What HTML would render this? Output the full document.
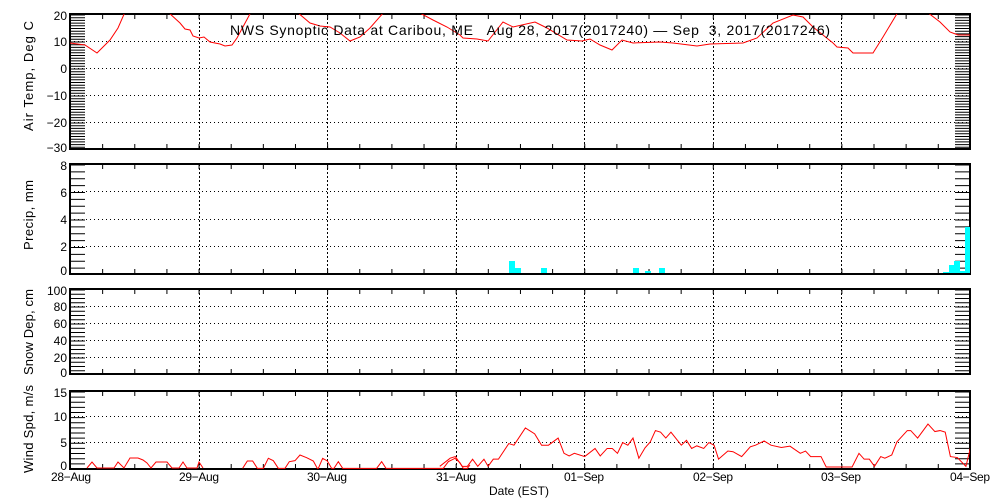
<!DOCTYPE html>
<html><head><meta charset="utf-8"><style>
html,body{margin:0;padding:0;background:#fff;}
svg{display:block;font-family:"Liberation Sans",sans-serif;font-size:12px;}
</style></head><body>
<svg width="1000" height="500" viewBox="0 0 1000 500" xmlns="http://www.w3.org/2000/svg">
<defs>
<clipPath id="c1"><rect x="70" y="14" width="900" height="135"/></clipPath>
<clipPath id="c4"><rect x="70" y="391" width="900" height="78"/></clipPath>
</defs>
<rect width="1000" height="500" fill="#fff"/>
<g stroke="#000" fill="none">
<g stroke-dasharray="2 2" stroke-width="1">
<path d="M199.5 14V149M327.5 14V149M456.5 14V149M584.5 14V149M713.5 14V149M841.5 14V149"/>
<path d="M199.5 164V274M327.5 164V274M456.5 164V274M584.5 164V274M713.5 164V274M841.5 164V274"/>
<path d="M199.5 289V374M327.5 289V374M456.5 289V374M584.5 289V374M713.5 289V374M841.5 289V374"/>
<path d="M199.5 391V469M327.5 391V469M456.5 391V469M584.5 391V469M713.5 391V469M841.5 391V469"/>
</g>
<g stroke-dasharray="1 3" stroke-width="1">
<path d="M70 41.5H970M70 68.5H970M70 95.5H970M70 122.5H970"/>
<path d="M70 191.5H970M70 219.5H970M70 246.5H970"/>
<path d="M70 306.5H970M70 323.5H970M70 340.5H970M70 357.5H970"/>
<path d="M70 416.5H970M70 442.5H970"/>
</g>
<g stroke-width="15">
<path d="M77.5 14.5V149" stroke-dasharray="1 1.7"/>
<path d="M962.5 14.5V149" stroke-dasharray="1 1.7"/>
<path d="M77.5 164.5V274" stroke-dasharray="1 5.875"/>
<path d="M962.5 164.5V274" stroke-dasharray="1 5.875"/>
<path d="M77.5 289.5V374" stroke-dasharray="1 3.25"/>
<path d="M962.5 289.5V374" stroke-dasharray="1 3.25"/>
<path d="M77.5 391.5V469" stroke-dasharray="1 4.13"/>
<path d="M962.5 391.5V469" stroke-dasharray="1 4.13"/>
</g>
<g stroke-width="5" stroke-dasharray="1 31.14">
<path d="M70 16.5H971M70 146.5H971"/>
<path d="M70 166.5H971M70 271.5H971"/>
<path d="M70 291.5H971M70 371.5H971"/>
<path d="M70 393.5H971M70 466.5H971"/>
</g>
<g stroke-width="2">
<rect x="70" y="14" width="900" height="135"/>
<rect x="70" y="164" width="900" height="110"/>
<rect x="70" y="289" width="900" height="85"/>
<rect x="70" y="391" width="900" height="78"/>
</g>
</g>
<g fill="#00ffff">
<rect x="509" y="261" width="6" height="12"/>
<rect x="515" y="268" width="6" height="5"/>
<rect x="541" y="268" width="6" height="5"/>
<rect x="633" y="268" width="6" height="5"/>
<rect x="645" y="271" width="6" height="2"/>
<rect x="659" y="268" width="6" height="5"/>
<rect x="943" y="272" width="6" height="1"/>
<rect x="949" y="265" width="5" height="8"/>
<rect x="954" y="261" width="6" height="12"/>
<rect x="960" y="271" width="5" height="2"/>
<rect x="965" y="227" width="5" height="46"/>
</g>
<polyline clip-path="url(#c1)" fill="none" stroke="#f00" stroke-width="1" points="70,43 85,45 97,53 102,48 110,40 118,28 125,12 168,12 180,23 185,29 190,30 193,36 199,38 204,37 210,42 220,44 225,46 232,45 237,38 251,12 297,12 310,23 320,26 330,27 340,33 350,41 360,37 370,28 384,12 418,12 433,20 447,27 460,35 463,38 477,39 488,41 503,22 513,27 535,22 547,28 567,40 582,41 590,39 600,45 612,50 622,40 633,43 660,42 673,43 697,46 710,44 743,43 757,38 773,23 793,15 803,17 813,27 833,43 837,47 848,48 853,53 873,53 883,37 898,12 927,12 940,22 950,32 958,35 970,35"/>
<g clip-path="url(#c4)" fill="none" stroke="#f00" stroke-width="1">
<polyline points="87,468 92,462 97,468 114,468 118,462 124,468 130,458 138,458 143,460 147,463 151,468 156,462 167,462 172,468 179,468 183,462 187,468 197,468 199,462 203,468"/>
<polyline transform="translate(230 440) scale(0.3333)" vector-effect="non-scaling-stroke" points="38,85 52,63 68,63 82,85 100,85 115,55 130,62 145,85 165,85 178,65 195,62 210,45 230,53 250,63 262,85 265,85 278,55 292,63 305,85 312,85 325,65 338,85 440,85 455,65 468,85 640,85 655,65 675,55 690,68 700,85 712,85 720,75"/>
<polyline transform="translate(439.8 380.2) scale(0.345 0.325)" vector-effect="non-scaling-stroke" points="0,265 30,240 45,235 65,265 80,265 95,243 110,265 128,243 140,265 155,243 170,243 200,195 215,200 248,147 275,165 295,200 315,200 343,178 360,225 375,233 390,225 420,235 450,210 465,233 485,210 500,210 515,225 530,192 545,200 560,178 577,240 595,208 610,190 625,155 640,160 655,178 670,160 700,200 715,185 730,210 745,202 765,210 780,192 795,200 808,243 835,218 850,220 875,235 900,205 915,200 940,187 960,200 990,207 1015,203 1045,225 1060,218 1075,235 1105,235 1120,267 1195,267 1215,225 1230,243 1245,243 1260,265 1278,235 1290,240 1310,230 1325,190 1355,155 1365,155 1385,178 1415,135 1435,158 1450,155 1465,160 1480,235 1500,238 1525,265 1540,200"/>
</g>
<text x="230" y="35" font-size="14" textLength="600" lengthAdjust="spacing" xml:space="preserve">NWS Synoptic Data at Caribou, ME   Aug 28, 2017(2017240) — Sep  3, 2017(2017246)</text>
<g text-anchor="end" font-size="12">
<text x="67" y="20">20</text><text x="67" y="46">10</text><text x="67" y="73">0</text><text x="67" y="100">−10</text><text x="67" y="127">−20</text><text x="67" y="152">−30</text>
<text x="67" y="170">8</text><text x="67" y="197">6</text><text x="67" y="224">4</text><text x="67" y="251">2</text><text x="67" y="275">0</text>
<text x="67" y="295">100</text><text x="67" y="311">80</text><text x="67" y="328">60</text><text x="67" y="345">40</text><text x="67" y="362">20</text><text x="67" y="377">0</text>
<text x="67" y="397">15</text><text x="67" y="421">10</text><text x="67" y="447">5</text><text x="67" y="470">0</text>
</g>
<g font-size="12">
<text x="51" y="481" textLength="40">28−Aug</text><text x="179" y="481" textLength="40">29−Aug</text><text x="307" y="481" textLength="40">30−Aug</text><text x="436" y="481" textLength="40">31−Aug</text><text x="564" y="481" textLength="40">01−Sep</text><text x="693" y="481" textLength="40">02−Sep</text><text x="821" y="481" textLength="40">03−Sep</text><text x="950" y="481" textLength="40">04−Sep</text>
<text x="489" y="495" textLength="60">Date (EST)</text>
<g font-size="13">
<text transform="translate(33 131) rotate(-90)" textLength="110">Air Temp, Deg C</text>
<text transform="translate(33 250) rotate(-90)" textLength="70">Precip, mm</text>
<text transform="translate(33 375) rotate(-90)" textLength="86">Snow Dep, cm</text>
<text transform="translate(33 473) rotate(-90)" textLength="88">Wind Spd, m/s</text>
</g>
</g>
</svg>
</body></html>
